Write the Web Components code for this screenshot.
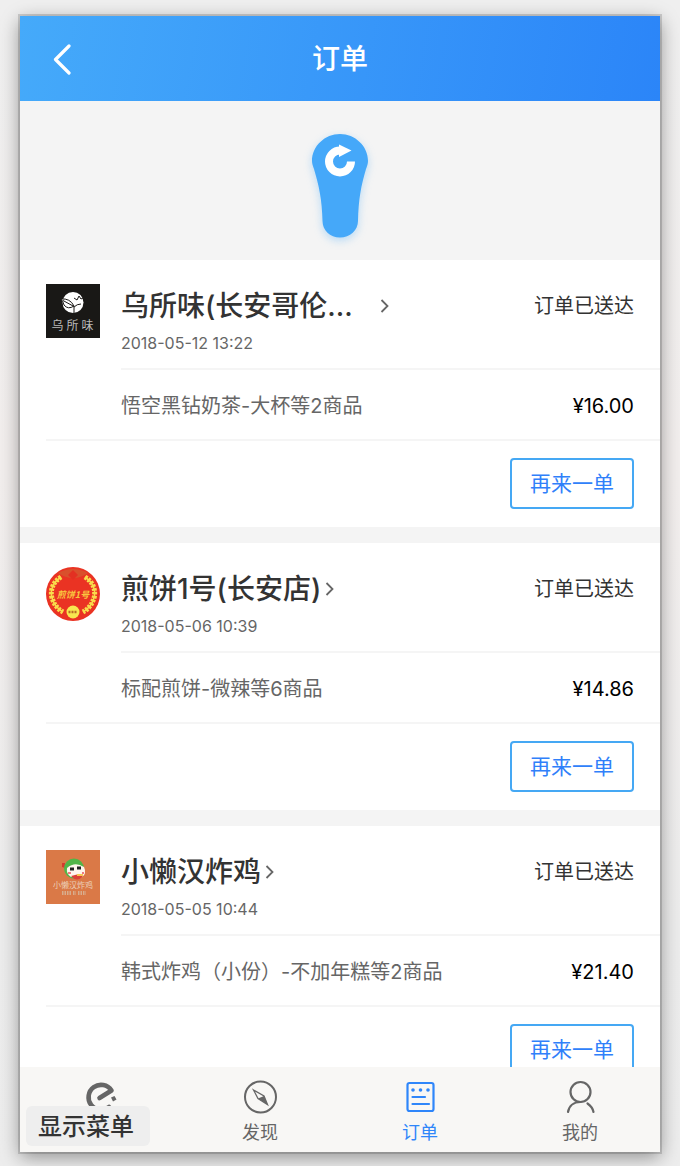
<!DOCTYPE html>
<html lang="zh-CN">
<head>
<meta charset="utf-8">
<meta name="viewport" content="width=device-width, initial-scale=1">
<title>订单</title>
<style>
  html, body { margin: 0; height: 100%; }
  body {
    background: linear-gradient(180deg, #efefef 0%, #f2eeed 40%, #ececec 80%, #ededed 100%);
    font-family: Inter, "Noto Sans CJK SC", sans-serif;
    color: #333;
  }
</style>
</head>
<body>
<app-window>
  <page-header slot="header">订单</page-header>
  <refresh-drop></refresh-drop>
  <order-card truncated date="2018-05-12 13:22" status="订单已送达" price="¥16.00">
    <shop-logo slot="logo" kind="tea"></shop-logo>
    <span slot="name">乌所味(长安哥伦...</span>
    悟空黑钻奶茶-大杯等2商品
  </order-card>
  <order-card date="2018-05-06 10:39" status="订单已送达" price="¥14.86">
    <shop-logo slot="logo" kind="pancake"></shop-logo>
    <span slot="name">煎饼1号(长安店)</span>
    标配煎饼-微辣等6商品
  </order-card>
  <order-card date="2018-05-05 10:44" status="订单已送达" price="¥21.40">
    <shop-logo slot="logo" kind="chicken"></shop-logo>
    <span slot="name">小懒汉炸鸡</span>
    韩式炸鸡（小份）-不加年糕等2商品
  </order-card>
  <tab-bar slot="footer">
    <tab-item icon="home" label="外卖"></tab-item>
    <tab-item icon="compass">发现</tab-item>
    <tab-item icon="orders" active>订单</tab-item>
    <tab-item icon="person">我的</tab-item>
  </tab-bar>
  <menu-hint slot="hint">显示菜单</menu-hint>
</app-window>

<script>
  class Base extends HTMLElement {
    connectedCallback() {
      if (this.shadowRoot) return;
      this.attachShadow({ mode: "open" }).innerHTML = this.render();
    }
  }

  customElements.define("app-window", class extends Base {
    render() {
      return `<style>
        :host { display: flex; box-sizing: border-box; height: 100vh; padding: 16px 20px 14px; }
        .frame { position: relative; flex: 1; min-width: 0; display: flex; flex-direction: column;
          background: #f4f4f4;
          box-shadow: 0 0 0 2px rgba(0,0,0,.14), 0 5px 18px rgba(0,0,0,.4); }
        main { flex: 1; min-height: 0; overflow-y: auto; scrollbar-width: none; }
      </style>
      <div class="frame">
        <slot name="header"></slot>
        <main><slot></slot></main>
        <slot name="footer"></slot>
        <slot name="hint"></slot>
      </div>`;
    }
  });

  customElements.define("page-header", class extends Base {
    render() {
      return `<style>
        :host { display: block; flex: none; }
        header { display: grid; grid-template-columns: 84px 1fr 84px; align-items: center; height: 85px;
          background: linear-gradient(100deg, #45aafa, #2b85f8); color: #fff; }
        button { height: 85px; padding: 0; border: 0; background: none; display: grid; place-items: center; }
        h1 { margin: 0; text-align: center; font-size: 28px; line-height: 40px; font-weight: 500; }
      </style>
      <header>
        <button type="button" aria-label="返回">
          <svg width="20" height="32" viewBox="0 0 20 32" fill="none" stroke="#fff" stroke-width="3.2" stroke-linecap="round" stroke-linejoin="round"><path d="M17 3 3.500 16.500 17 30"/></svg>
        </button>
        <h1><slot></slot></h1>
      </header>`;
    }
  });

  customElements.define("refresh-drop", class extends Base {
    render() {
      return `<style>
        :host { display: flex; justify-content: center; align-items: center; height: 159px; padding-top: 11px; box-sizing: border-box; }
        svg { filter: drop-shadow(0 3px 4px rgba(69,170,250,.35)); }
      </style>
      <svg width="58" height="106" viewBox="0 0 58 106">
        <path fill="#45a8f9" d="M29 1C44 1 57 13 57 28C57 31 56 33 55 36C50 53 47.500 66 47 88C47 97 39 104.500 29 104.500S11.500 97 11.500 88C11 66 8 53 3 36C2 33 1 31 1 28C1 13 14 1 29 1Z"/>
        <path fill="none" stroke="#fff" stroke-width="8" d="M40 28.500A11 11 0 1 1 29 17.500"/>
        <path fill="#fff" d="M28 11.500 40.500 17.500 28 24Z"/>
      </svg>`;
    }
  });

  const LOGOS = {
    tea: `<rect width="54" height="54" fill="#191816"/>
      <circle cx="27" cy="18.500" r="10.500" fill="#fff"/>
      <path d="M15 15Q24 14 28 22Q22 26 18 21Q17 17 15 15ZM17 16.500 28 22.500M28 29V23Q31 20 35 20" fill="#fff" stroke="#191816" stroke-width="1"/>
      <path d="M28 14 31 16 33 12 35 15 39 13" fill="none" stroke="#191816" stroke-width="1"/>
      <text x="28" y="46" text-anchor="middle" font-size="12" letter-spacing="3" fill="#bbb" font-family="Noto Sans CJK SC">乌所味</text>`,
    pancake: `<circle cx="27" cy="27" r="27" fill="#ea3323"/>
      <path d="M12 6Q27-2 42 6Q35 11 27 11T12 6Z" fill="#d9502c"/><path d="m27 3 5 5-5 5-5-5Z" fill="#e33022"/>
      <g fill="none" stroke="#f9dc4c">
        <path d="M15 10Q4 17 5.500 29Q8 40 17 45M39 10Q50 17 48.500 29Q46 40 37 45" stroke-width="1.500"/>
        <path d="M15 10Q4 17 5.500 29Q8 40 17 45M39 10Q50 17 48.500 29Q46 40 37 45" stroke-width="5" stroke-dasharray="2.500 1.200"/>
      </g>
      <circle cx="27" cy="45" r="6.500" fill="#f8e84f"/>
      <path d="M22.500 45h9" stroke="#ba6d26" stroke-width="2.500" stroke-dasharray="2 1"/>
      <text x="27" y="31" text-anchor="middle" font-size="9" font-weight="700" font-style="italic" fill="#f9c63f" font-family="Noto Sans CJK SC">煎饼1号</text>`,
    chicken: `<rect width="54" height="54" fill="#da7947"/>
      <path d="M16 13 19 13 19 18 16 17Z" fill="#d5392f"/>
      <circle cx="28" cy="18.500" r="10" fill="#52b548"/>
      <path d="M21 18Q29 11 38 17Q41 24 36 27H25Q20 24 21 18Z" fill="#fff5ed"/>
      <path d="M24 19h4M31 18h4" stroke="#222" stroke-width="3"/>
      <path d="M22 23h3M36 23h2" stroke="#ee7b82" stroke-width="2"/>
      <path d="M25 26Q31 33 37 26L33 24Z" fill="#dc4038"/><path d="M31 25h6" stroke="#f5c752" stroke-width="2"/>
      <text x="27" y="38" text-anchor="middle" font-size="8" fill="#ecd0b8" font-family="Noto Sans CJK SC">小懒汉炸鸡</text>
      <path d="M16 43h9M27 43h3M32 43h8" stroke="#d8ad8d" stroke-width="4" stroke-dasharray="1.500 1"/>`
  };

  customElements.define("shop-logo", class extends Base {
    render() {
      return `<style>:host { display: block; } svg { display: block; }</style>
        <svg width="54" height="54" viewBox="0 0 54 54" aria-hidden="true">${LOGOS[this.getAttribute("kind")]}</svg>`;
    }
  });

  customElements.define("order-card", class extends Base {
    render() {
      const a = n => this.getAttribute(n);
      return `<style>
        :host { display: block; margin-bottom: 16px; background: #fff; }
        article { display: grid; grid-template-columns: 54px 1fr; column-gap: 21px; padding-left: 26px; }
        .logo { padding-top: 24px; }
        .body { min-width: 0; }
        .head, .item { display: flex; justify-content: space-between; padding-right: 26px; }
        .head { box-sizing: border-box; height: 110px; padding-top: 24px; border-bottom: 2px solid #f5f5f5; }
        .title { display: flex; align-items: center; gap: 4px; }
        h2 { margin: 0; font-size: 28px; line-height: 44px; font-weight: 500; white-space: nowrap; }
        :host([truncated]) h2 { min-width: 255px; }
        time { display: block; font-size: 16px; line-height: 30px; color: #666; }
        .status { font-size: 20px; line-height: 44px; }
        .item { font-size: 20px; line-height: 24px; padding-top: 24px; padding-bottom: 21px; color: #666; }
        .price { color: #000; }
        footer { grid-column: 1 / -1; display: flex; justify-content: flex-end; padding: 17px 26px 18px 0; border-top: 2px solid #f5f5f5; }
        button { box-sizing: border-box; width: 124px; height: 51px; padding: 0; border: 2px solid #45a8f4; border-radius: 4px;
          background: #fff; color: #3080fa; font: inherit; font-size: 21px; line-height: 30px; }
      </style>
      <article>
        <div class="logo"><slot name="logo"></slot></div>
        <div class="body">
          <div class="head">
            <div>
              <div class="title"><h2><slot name="name"></slot></h2>
                <svg width="10" height="16" viewBox="0 0 10 16" fill="none" stroke="#666" stroke-width="1.800"><path d="M1.500 2 7.500 8 1.500 14"/></svg>
              </div>
              <time>${a("date")}</time>
            </div>
            <span class="status">${a("status")}</span>
          </div>
          <div class="item"><span><slot></slot></span><span class="price">${a("price")}</span></div>
        </div>
        <footer><button type="button">再来一单</button></footer>
      </article>`;
    }
  });

  customElements.define("tab-bar", class extends Base {
    render() {
      return `<style>
        :host { display: block; flex: none; }
        nav { display: grid; grid-template-columns: repeat(4, 1fr); height: 85px; background: #f8f7f5; }
      </style><nav><slot></slot></nav>`;
    }
  });

  const ICONS = {
    home: `<path d="M17.500 19 29.500 11.500A12.500 12.500 0 1 0 27 28" stroke-width="4.600" stroke-linecap="round" stroke-linejoin="round"/><path d="m29 18.500 3.500-1.500 2 3.500-3.500 2Z" fill="currentColor" stroke="none"/>`,
    compass: `<circle cx="18.500" cy="18" r="15.500" stroke-width="2"/><path d="M11.500 11 22 17 25.500 25.500 16 19.500Z" stroke-width="1.300"/><path d="M22 17 25.500 25.500 16 19.500Z" fill="currentColor" stroke="none"/>`,
    orders: `<rect x="5.500" y="4" width="26" height="28" rx="2" stroke-width="2.200"/><path d="M10.500 18h12.500M10.500 25h16.500" stroke-width="2.200" stroke-linecap="round"/><g fill="currentColor" stroke="none"><circle cx="11" cy="11" r="1.800"/><circle cx="18.500" cy="11" r="1.800"/><circle cx="26" cy="11" r="1.800"/></g>`,
    person: `<circle cx="18.500" cy="13" r="10" stroke-width="2.200"/><path d="M6 33C7 27 11.500 23 18.500 23M25.500 24.500Q30.500 28 31.500 33" stroke-width="2.200" stroke-linecap="round"/>`
  };

  customElements.define("tab-item", class extends Base {
    render() {
      const label = this.getAttribute("label");
      return `<style>
        :host { display: block; color: #666; }
        :host([active]) { color: #2f86fa; }
        a { display: flex; flex-direction: column; align-items: center; gap: 5px; padding-top: 12px; color: inherit; text-decoration: none; font-size: 18px; line-height: 26px; }
        svg { display: block; }
      </style>
      <a href="#${this.getAttribute("icon")}"${label ? ` aria-label="${label}"` : ""}>
        <svg width="36" height="36" viewBox="0 0 36 36" fill="none" stroke="currentColor" aria-hidden="true">${ICONS[this.getAttribute("icon")]}</svg>
        <span><slot></slot></span>
      </a>`;
    }
  });

  customElements.define("menu-hint", class extends Base {
    render() {
      return `<style>
        :host { position: absolute; left: 6px; bottom: 6px; padding: 2px 16px 0 12px; border-radius: 6px; background: #eee;
          font-size: 24px; line-height: 38px; font-weight: 500; }
      </style><slot></slot>`;
    }
  });
</script>
</body>
</html>
